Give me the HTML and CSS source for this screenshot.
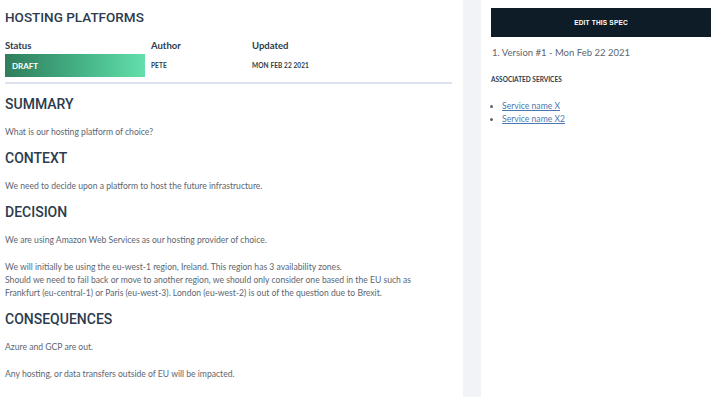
FILE: index.html
```html
<!DOCTYPE html>
<html>
<head>
<meta charset="utf-8">
<link rel="stylesheet" href="styles.css">
</head>
<body>
<div class="page">
  <main class="main">
    <h1 class="title">HOSTING PLATFORMS</h1>
    <div class="meta">
      <div class="meta-col meta-status">
        <div class="meta-label">Status</div>
        <div class="badge">DRAFT</div>
      </div>
      <div class="meta-col meta-author">
        <div class="meta-label">Author</div>
        <div class="meta-value">PETE</div>
      </div>
      <div class="meta-col">
        <div class="meta-label">Updated</div>
        <div class="meta-value">MON FEB 22 2021</div>
      </div>
    </div>
    <hr class="rule">
    <section class="section">
      <h2 class="heading">SUMMARY</h2>
      <p class="text">What is our hosting platform of choice?</p>
    </section>
    <section class="section">
      <h2 class="heading">CONTEXT</h2>
      <p class="text">We need to decide upon a platform to host the future infrastructure.</p>
    </section>
    <section class="section">
      <h2 class="heading">DECISION</h2>
      <p class="text">We are using Amazon Web Services as our hosting provider of choice.<br><br>We will initially be using the eu-west-1 region, Ireland. This region has 3 availability zones.<br>Should we need to fail back or move to another region, we should only consider one based in the EU such as Frankfurt (eu-central-1) or Paris (eu-west-3). London (eu-west-2) is out of the question due to Brexit.</p>
    </section>
    <section class="section">
      <h2 class="heading">CONSEQUENCES</h2>
      <p class="text">Azure and GCP are out.<br><br>Any hosting, or data transfers outside of EU will be impacted.</p>
    </section>
  </main>
  <div class="strip"></div>
  <aside class="side">
    <button class="edit-btn">EDIT THIS SPEC</button>
    <ol class="versions">
      <li>Version #1 - Mon Feb 22 2021</li>
    </ol>
    <h3 class="side-label">ASSOCIATED SERVICES</h3>
    <ul class="services">
      <li><a href="#">Service name X</a></li>
      <li><a href="#">Service name X2</a></li>
    </ul>
  </aside>
</div>
</body>
</html>
```

FILE: styles.css
```css
* { box-sizing: border-box; }
html, body { margin: 0; padding: 0; background: #ffffff; }
body {
  font-family: Lato, "Open Sans", sans-serif;
  color: #5d6670;
  width: 719px;
  height: 397px;
  overflow: hidden;
}
.page {
  display: grid;
  grid-template-columns: 463px 18px 1fr;
  height: 397px;
}
.main {
  padding: 8px 11px 0 5px;
}
.title {
  margin: 0;
  font-family: Roboto, Lato, sans-serif;
  font-size: 13.5px;
  line-height: 18px;
  font-weight: 500;
  color: #2c3b4d;
}
.meta {
  display: flex;
  margin-top: 14px;
}
.meta-col { display: flex; flex-direction: column; }
.meta-status { width: 146px; }
.meta-author { width: 101px; }
.meta-label {
  font-size: 9.5px;
  line-height: 12px;
  font-weight: 700;
  color: #2c3b4d;
  height: 13px;
}
.badge {
  width: 140px;
  height: 23px;
  margin-top: 1px;
  padding-left: 7px;
  display: flex;
  align-items: center;
  font-size: 8px;
  font-weight: 700;
  color: #ffffff;
  background: linear-gradient(90deg, #2f7d5c 0%, #45b386 55%, #62e0ab 100%);
}
.meta-value {
  margin-top: 1px;
  height: 23px;
  display: flex;
  align-items: center;
  font-size: 6.5px;
  font-weight: 700;
  color: #2c3b4d;
  letter-spacing: 0.1px;
}
.rule {
  margin: 5px 0 0 0;
  border: 0;
  height: 2px;
  background: #dde3ee;
}
.section { margin-top: 11px; }
.section + .section { margin-top: 10px; }
.heading {
  margin: 0;
  font-family: Roboto, Lato, sans-serif;
  font-size: 14px;
  line-height: 18px;
  font-weight: 500;
  color: #2c3b4d;
}
.text {
  margin: 13px 0 0 0;
  max-width: 435px;
  font-size: 8.6px;
  line-height: 13.2px;
  color: #5d6670;
}
.strip {
  background: #f1f3f7;
}
.side {
  padding: 8px 8px 0 10px;
}
.edit-btn {
  display: block;
  width: 100%;
  height: 29px;
  border: 0;
  background: #0d1c26;
  color: #ffffff;
  font-family: "Liberation Sans", Arial, sans-serif;
  font-size: 6.5px;
  font-weight: 700;
  letter-spacing: 0.2px;
  cursor: pointer;
}
.versions {
  margin: 10px 0 0 0;
  padding: 0 0 0 1px;
  list-style: none;
  font-size: 9.5px;
  line-height: 12px;
  color: #5d6670;
}
.versions li::before { content: "1. "; }
.side-label {
  margin: 17px 0 0 0;
  font-size: 6.5px;
  line-height: 8px;
  font-weight: 700;
  color: #2c3b4d;
}
.services {
  margin: 16px 0 0 0;
  padding: 0 0 0 11px;
  font-size: 8.6px;
  line-height: 13px;
  color: #5d6670;
}
.services a {
  color: #4b78ae;
  text-decoration: underline;
}
```
